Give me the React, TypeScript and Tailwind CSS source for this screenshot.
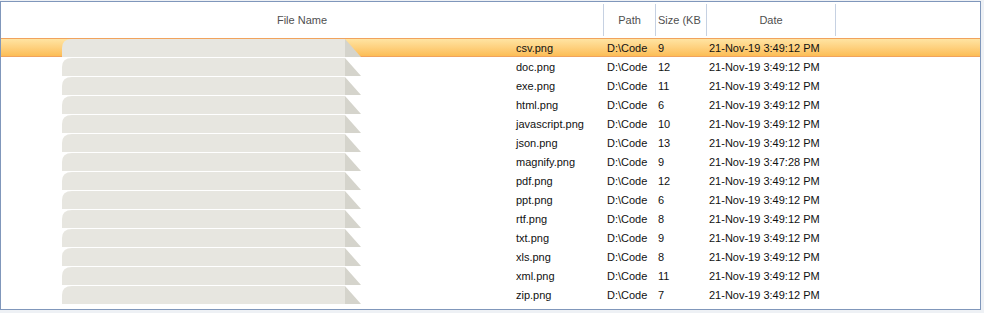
import React from 'react';

const ROWS = [
  { name: 'csv.png', size: 9, date: '21-Nov-19 3:49:12 PM' },
  { name: 'doc.png', size: 12, date: '21-Nov-19 3:49:12 PM' },
  { name: 'exe.png', size: 11, date: '21-Nov-19 3:49:12 PM' },
  { name: 'html.png', size: 6, date: '21-Nov-19 3:49:12 PM' },
  { name: 'javascript.png', size: 10, date: '21-Nov-19 3:49:12 PM' },
  { name: 'json.png', size: 13, date: '21-Nov-19 3:49:12 PM' },
  { name: 'magnify.png', size: 9, date: '21-Nov-19 3:47:28 PM' },
  { name: 'pdf.png', size: 12, date: '21-Nov-19 3:49:12 PM' },
  { name: 'ppt.png', size: 6, date: '21-Nov-19 3:49:12 PM' },
  { name: 'rtf.png', size: 8, date: '21-Nov-19 3:49:12 PM' },
  { name: 'txt.png', size: 9, date: '21-Nov-19 3:49:12 PM' },
  { name: 'xls.png', size: 8, date: '21-Nov-19 3:49:12 PM' },
  { name: 'xml.png', size: 11, date: '21-Nov-19 3:49:12 PM' },
  { name: 'zip.png', size: 7, date: '21-Nov-19 3:49:12 PM' },
];

// stretched page thumbnail (light grey strip with folded corner on the right)
const Thumb = () => (
  <svg width="301" height="18" viewBox="0 0 301 18" className="shrink-0 block">
    <path d="M0 18 L0 9 Q0 0 10 0 L283 0 L283 18 Z" fill="#e7e6e0" />
    <path d="M283 0 L299 18 L283 18 Z" fill="#d5d4cc" />
  </svg>
);

const App = () => {
  return (
    <div className="w-[984px] h-[313px] bg-[#eef1f5] pt-px" style={{ fontFamily: '"Liberation Sans", Arial, sans-serif' }}>
      <div className="w-[981px] h-[309px] bg-white border border-[#8097bb] overflow-hidden">
        {/* Header */}
        <div className="flex h-[36px] text-[11px] text-[#4f4f4f]">
          <div className="w-[603px] flex items-center justify-center border-r border-[#c6d1e2] my-[2px]">File Name</div>
          <div className="w-[52px] flex items-center justify-center border-r border-[#c6d1e2] my-[2px]">Path</div>
          <div className="w-[51px] flex items-center pl-[2px] border-r border-[#c6d1e2] my-[2px] overflow-hidden whitespace-nowrap">Size (KB</div>
          <div className="w-[129px] flex items-center justify-center border-r border-[#c6d1e2] my-[2px]">Date</div>
          <div className="flex-1" />
        </div>

        {/* Rows */}
        <div className="text-[11px] text-[#111]">
          {ROWS.map((r, i) => {
            const sel = i === 0;
            return (
              <div
                key={r.name}
                className={
                  sel
                    ? 'flex items-center h-[19px] bg-gradient-to-b from-[#ffe4a2] to-[#fcbd55] border-y border-[#f1a35d]'
                    : 'flex items-center h-[19px] border-y border-transparent'
                }
              >
                <div className="w-[603px] flex items-center shrink-0">
                  <div className="ml-[61px]">
                    <Thumb />
                  </div>
                  <span className="ml-[153px] mt-[2px] whitespace-nowrap">{r.name}</span>
                </div>
                <div className="w-[52px] pl-[3px] mt-[2px] shrink-0 whitespace-nowrap">D:\Code</div>
                <div className="w-[51px] pl-[2px] mt-[2px] shrink-0">{r.size}</div>
                <div className="w-[129px] pl-[2px] mt-[2px] shrink-0 whitespace-nowrap">{r.date}</div>
              </div>
            );
          })}
        </div>
      </div>
    </div>
  );
};

export default App;
